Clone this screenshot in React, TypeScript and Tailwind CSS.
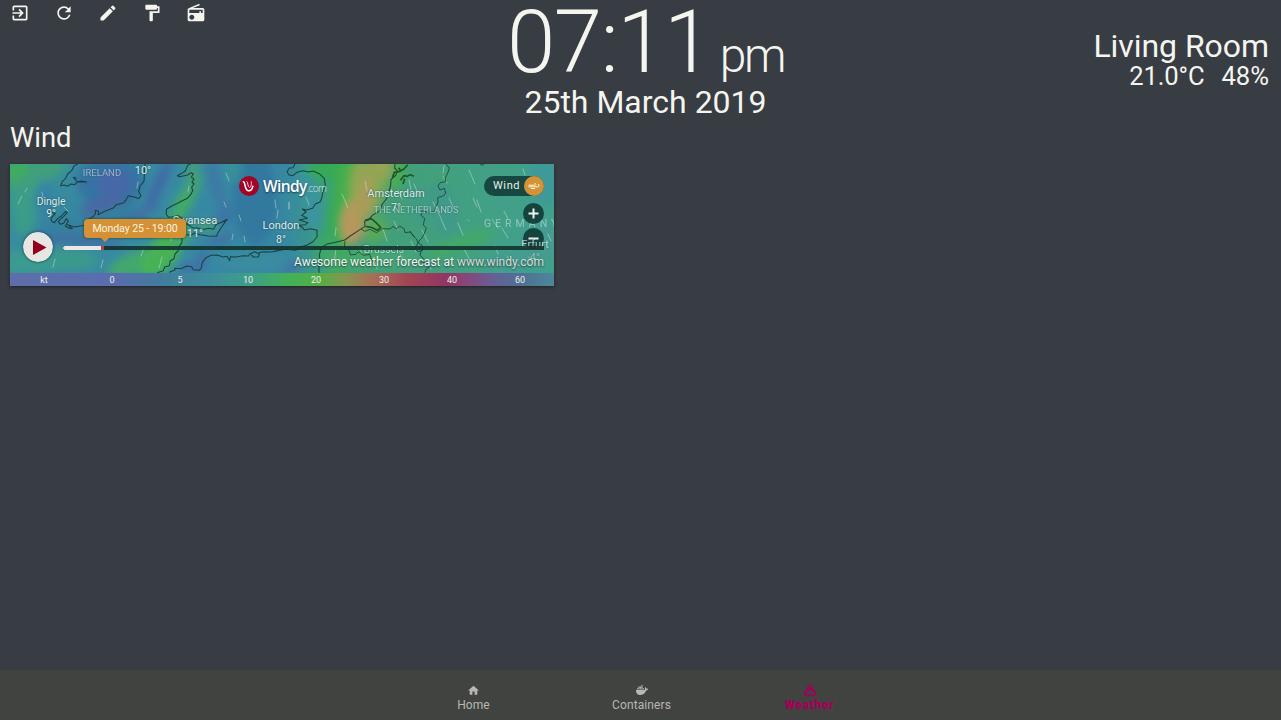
import type { ReactNode } from "react";
import { MdExitToApp, MdRefresh, MdEdit, MdRadio, MdHome } from "react-icons/md";
import { FaDocker } from "react-icons/fa";

// [cx, cy, rx, ry, color, angle]
const blobs: [number, number, number, number, string, number][] = [
  [14, 30, 14, 42, "#3b9c88", 0],
  [25, 8, 34, 14, "#3f9f7d", -20],
  [6, 6, 14, 10, "#40ac60", -30],
  [75, 60, 60, 14, "#34809f", -15],
  [34, 38, 9, 22, "#3584a4", 0],
  [100, 18, 34, 26, "#3573a2", 0],
  [58, 44, 18, 12, "#3688a0", 0],
  [92, 40, 24, 7, "#4866a5", -20],
  [104, 18, 18, 12, "#4668a8", 0],
  [72, 77, 44, 4, "#426ba3", 5],
  [148, 22, 6, 30, "#3f6ba5", 25],
  [120, 56, 34, 5, "#4070a4", -28],
  [20, 98, 34, 12, "#3b9b90", 0],
  [60, 96, 28, 10, "#3a9a8c", 0],
  [130, 98, 34, 12, "#42a86c", -20],
  [152, 90, 28, 15, "#47b255", -50],
  [168, 66, 12, 16, "#42a96a", -30],
  [175, 36, 8, 30, "#43aa66", 30],
  [182, 12, 7, 18, "#429f7c", 10],
  [198, 62, 14, 5, "#42a07c", 0],
  [206, 20, 6, 26, "#3c78a6", -15],
  [214, 52, 8, 12, "#3c74a6", 30],
  [210, 76, 16, 5, "#3f72a6", -20],
  [182, 104, 14, 5, "#4070a6", 0],
  [192, 94, 5, 8, "#3f70a6", 0],
  [245, 35, 22, 46, "#33789f", 0],
  [222, 6, 10, 12, "#389098", 0],
  [278, 102, 11, 7, "#4270a8", 0],
  [245, 98, 36, 9, "#3a8ca0", 0],
  [296, 15, 7, 20, "#3893a0", 0],
  [303, 46, 8, 20, "#3a94a0", 0],
  [330, 60, 13, 55, "#38ab55", 4],
  [318, 6, 24, 10, "#35aa55", 0],
  [338, 22, 12, 28, "#45ae4c", 0],
  [366, 14, 13, 40, "#78a954", 12],
  [350, 20, 10, 26, "#92a654", 5],
  [343, 58, 12, 22, "#bb955f", 5],
  [354, 38, 9, 26, "#aa9c58", 15],
  [371, 4, 12, 12, "#94a552", 0],
  [389, 10, 5, 18, "#44b048", 15],
  [366, 66, 10, 14, "#58aa55", 40],
  [316, 84, 12, 14, "#3ea668", 0],
  [350, 96, 40, 10, "#45a868", -5],
  [388, 92, 20, 12, "#44a578", 0],
  [450, 80, 36, 8, "#43a868", -20],
  [428, 22, 12, 12, "#43a470", 0],
  [433, 45, 14, 30, "#419a89", -15],
  [410, 40, 14, 20, "#419c84", 0],
  [535, 15, 16, 28, "#3d9a98", 0],
  [532, 78, 22, 20, "#459c90", 0],
  [490, 30, 20, 20, "#43a088", 0],
  [505, 98, 30, 8, "#439c92", 0],
];

// [x, y, dx, dy] wind particle streaks
const streaks: number[][] = [
  [8, 40, 4, -8], [15, 28, 2, -4], [44, 39, 5, 3], [54, 43, 4, 4], [32, 28, 1, 6],
  [127, 24, 1, -6], [91, 104, 2, -8], [131, 92, 3, -8], [43, 103, 2, -8], [97, 64, 4, -3],
  [149, 104, 3, -11], [161, 77, 1, -8], [178, 28, 1, -6], [216, 9, 3, 8], [229, 51, 2, 6],
  [223, 70, -1, 6], [234, 72, 1, 6], [214, 38, 2, 5], [268, 46, -1, 8], [265, 36, 1, 8],
  [296, 33, 3, 8], [279, 39, 0, 6], [355, 17, 2, 10], [332, 30, 6, 14], [326, 64, -1, 8],
  [326, 85, -2, 14], [279, 38, 0, 7], [349, 82, 3, 8], [373, 65, 4, 12], [388, 26, 4, 9],
  [399, 16, 2, 10], [384, 57, 4, 9], [404, 20, 5, 12], [412, 66, 6, 12], [401, 77, 5, 11],
  [425, 43, 6, 11], [423, 38, 3, 6], [433, 12, 4, 7], [448, 59, 5, 12], [439, 34, 4, 9],
  [454, 85, 7, 13], [459, 6, 6, 14], [463, 34, 4, 9], [467, 36, 4, 12], [431, 55, 5, 11],
  [480, 23, 3, 8], [482, 55, 6, 9], [485, 82, 3, 8], [492, 64, 6, 10], [497, 92, 5, 9],
  [494, 47, 4, 8], [513, 5, 2, 6], [519, 93, 4, 7], [522, 42, 3, 7], [538, 70, 3, 7],
  [458, 56, 1, 1], [418, 97, 3, 8], [390, 90, 5, 10], [365, 98, 2, 7], [434, 2, -1, 7],
];

function WindMap() {
  return (
    <svg className="absolute inset-0 h-[109px] w-[544px]" viewBox="0 0 544 109" aria-hidden="true">
      <defs>
        <linearGradient id="base">
          <stop offset="0" stopColor="#398c9d" />
          <stop offset=".25" stopColor="#378aa2" />
          <stop offset=".5" stopColor="#3787a4" />
          <stop offset=".58" stopColor="#3b9d80" />
          <stop offset=".72" stopColor="#439f7a" />
          <stop offset="1" stopColor="#40a18e" />
        </linearGradient>
        <filter id="soft" x="-60%" y="-60%" width="220%" height="220%">
          <feGaussianBlur stdDeviation="4" />
        </filter>
      </defs>
      <rect width="544" height="109" fill="url(#base)" />
      <g filter="url(#soft)">
        {blobs.map(([cx, cy, rx, ry, color, angle], i) => (
          <ellipse key={i} cx={cx} cy={cy} rx={rx} ry={ry} fill={color} transform={`rotate(${angle} ${cx} ${cy})`} />
        ))}
      </g>
      <g stroke="#d7e8df" strokeWidth=".9" strokeLinecap="round" opacity=".5">
        {streaks.map(([x, y, dx, dy], i) => (
          <line key={i} x1={x} y1={y} x2={x + dx} y2={y + dy} />
        ))}
      </g>
      <g fill="none" stroke="#17352f" strokeWidth="3.2" strokeLinejoin="round" opacity=".85">
        {/* Ireland */}
        <g transform="scale(.33333) translate(-15 -12)">
          <path d="M218 12L207 18 200 32 188 42 182 55 172 64 167 77 178 75 188 79 197 72 209 74 219 65 245 66 228 63 217 66 205 52 215 55" />
          <path d="M133 154L145 158 151 161 138 175 140 184 148 188 158 176 169 168 182 154 187 157 176 169 160 184 166 193 176 190 184 176 190 184 181 198 193 205 202 206 188 194 207 201 239 196 241 183 262 172 271 162 271 151 281 154 279 164 296 155 326 143 334 134 356 128 364 118 370 107 391 112 401 116 408 107 401 95 405 78 417 64 418 45 420 12" />
        </g>
        {/* Wales and the south-west */}
        <g transform="scale(.33333) translate(390 -12)">
          <path d="M151 12L143 16 136 33 125 40 112 47 119 50 143 45 153 38 160 42 154 52 162 57 156 66 162 72 155 81 158 92 152 104 142 115 124 124 113 130 97 137 80 147 78 161 85 172 101 170 114 167 125 174 119 184 138 189" />
          <path d="M138 224L154 226 163 219 181 224 205 228 230 229 234 218 243 204 258 182 262 178 240 189 229 193 221 208 206 205 188 209 173 204 158 203 145 195 138 190M126 234L126 248 116 261 114 273 105 282 102 296 91 302 88 317 74 321 70 332 52 338" />
          <path d="M88 337L105 330 104 325 123 326 140 318 155 320 160 329 178 331 184 324 187 307 198 293 213 286 231 285 250 291 261 289 269 302 271 290 288 291 309 287 325 288 331 281 344 275 358 282 355 291 340 291 333 284M356 278L370 275 394 276 410 273" />
        </g>
        {/* East Anglia, Kent and the French coast */}
        <g transform="scale(.33333) translate(795 -12)">
          <path d="M60 12L54 23 43 24 36 35 42 45 54 47 66 37 83 32 101 36 114 33 133 41 148 56 151 76 144 96 140 115 135 126 121 132 113 145 95 150 82 147 93 156 80 166 97 175 73 180 99 188 91 194 69 196 82 202 88 210 107 206 126 211 126 231 113 246 96 255 75 262 62 271 32 268 0 274" />
          <path d="M132 338L132 316 136 307 133 285 139 262 154 253 182 247 209 240 230 225 256 208 270 199 269 184 280 180 292 166 315 152 322 132 334 117 341 98 347 76 348 59 363 45 366 31 359 24 360 12" />
          <path stroke="#164725" strokeWidth="5" d="M270 181L289 176 303 188 317 202 307 211 292 203 272 199M352 53L358 37 375 34 387 27 398 14M377 32L371 23M376 61L387 47 397 49 405 44 417 49M384 72L389 56" />
          <path strokeWidth="2.6" d="M210 243L208 262 221 269 227 285 243 283 250 275 266 286 284 283 290 300 300 309M258 207L270 214 285 208 305 218 322 206 345 207 354 199 365 207 374 198 388 207 390 218 405 216 419 231" />
        </g>
        {/* Benelux and German borders */}
        <g strokeWidth="2.6" transform="scale(.33333) translate(1200 -12)">
          <path d="M108 12L118 24 112 43 106 52 107 65 91 68 84 78 90 90 103 85 107 99 101 107 83 113 84 128 76 143 75 155 55 157 36 153 33 166 44 175 40 195 49 204 43 221 35 235 27 243 20 256 14 267 26 275 38 271 36 255 25 249 19 237 10 228 0 213" />
          <path d="M34 270L30 286 40 295 35 305 52 311 62 318 49 327 44 338M210 12L218 16 223 12" />
        </g>
      </g>
    </svg>
  );
}

function MapLabel({ at, children }: { at: string; children: ReactNode }) {
  return (
    <span className={`absolute -translate-x-1/2 text-center leading-3 whitespace-nowrap text-[#dfece9] [text-shadow:0_0_2px_#1e494c] ${at}`}>
      {children}
    </span>
  );
}

function WindCard() {
  return (
    <div className="relative h-[122px] w-[544px] overflow-hidden shadow-[0_1px_3px_#1f2226]">
      <WindMap />
      <MapLabel at="left-[92px] top-[3px] text-[9.5px] opacity-55">IRELAND</MapLabel>
      <MapLabel at="left-[133px] top-[1px] text-[11px]">10°</MapLabel>
      <MapLabel at="left-[41px] top-[32px] text-[10.3px]">Dingle<br />9°</MapLabel>
      <MapLabel at="left-[185px] top-[51px] text-[11px]">Swansea</MapLabel>
      <MapLabel at="left-[185px] top-[64px] text-[11px]">11°</MapLabel>
      <MapLabel at="left-[271px] top-[56px] text-[11px]">London</MapLabel>
      <MapLabel at="left-[271px] top-[70px] text-[10.5px]">8°</MapLabel>
      <MapLabel at="left-[386px] top-[24px] text-[11px]">Amsterdam</MapLabel>
      <MapLabel at="left-[386px] top-[38px] text-[10.5px]">7°</MapLabel>
      <MapLabel at="left-[406px] top-[40px] text-[9.4px] opacity-60">THE NETHERLANDS</MapLabel>
      <MapLabel at="left-[374px] top-[80px] text-[10.5px] opacity-75">Brussels</MapLabel>
      <span className="absolute top-[54px] left-[474px] text-[10.5px] leading-3 tracking-[4px] whitespace-nowrap text-[#dfece9] opacity-50">GERMANY</span>

      <div className="absolute top-[12px] left-[229px] flex items-center">
        <svg className="size-5" viewBox="0 0 20 20">
          <circle cx="10" cy="10" r="10" fill="#a10425" />
          <path d="M4.3 5.8c2.4.1.9 8.2 5 9 2.7.4 4-2 4.6-4.6" fill="none" stroke="#fff" strokeWidth="1.5" strokeLinecap="round" />
          <path d="M8 5.5c1.2.6.6 5.8 2.4 6 1.9 0 2-3 1.9-5.8" fill="none" stroke="#f4dadd" strokeWidth="1" strokeLinecap="round" />
        </svg>
        <span className="ml-1 font-[family-name:Open_Sans] text-[15.5px] leading-5 font-semibold tracking-[-0.6px] text-white [text-shadow:0_1px_2px_#1b3a4a]">Windy</span>
        <span className="mt-1 font-[family-name:Open_Sans] text-[10px] leading-4 font-light tracking-[-0.6px] text-[#d9e5e4]">.com</span>
      </div>

      <div className="absolute top-[12px] right-[10px] flex h-5 w-[60px] items-center justify-between rounded-full bg-[#123d3a]/90 pl-[9px] text-[11px] tracking-[0.6px] text-[#eeeeea]">
        Wind
        <svg className="size-5" viewBox="0 0 20 20">
          <circle cx="10" cy="10" r="10" fill="#d49336" />
          <path d="M4.5 9.2h6.5c1.4 0 1.2-1.9-.4-1.7M4.5 10.8h9.3c2.2 0 1.8-2.5.2-2.4M7 12.5h4" fill="none" stroke="#fff5e1" strokeWidth="1" />
        </svg>
      </div>
      <svg className="absolute top-[39px] left-[513px] h-[46px] w-[21px]" viewBox="0 0 21 46">
        <g fill="#123d38" opacity=".92">
          <circle cx="10.5" cy="10.5" r="10.5" />
          <circle cx="10.5" cy="35.5" r="10.5" />
        </g>
        <path d="M5.5 10.5h10M10.5 5.5v10M5.5 35.5h10" stroke="#f4f4ef" strokeWidth="2" />
      </svg>
      <MapLabel at="left-[525px] top-[75px] text-[11px] opacity-75">Erfurt</MapLabel>
      <MapLabel at="left-[525px] top-[88px] text-[10.5px] opacity-50">4°</MapLabel>

      <div className="absolute top-[82px] left-[53px] flex h-1 w-[481px] bg-[#12332e]/90">
        <div className="w-[38px] rounded-l-full bg-[#ebe9e5]" />
        <div className="w-[3px] bg-[#b4463c]" />
      </div>
      <div className="absolute top-[55px] left-[74px] flex h-[19px] w-[102px] items-center justify-center rounded bg-[#d49136] text-[10.6px] tracking-[-0.1px] whitespace-nowrap text-[#fcf1de] shadow-[0_0_3px_#1c3c3c]">
        Monday 25 - 19:00
        <svg className="absolute top-[18px] left-[16px] h-[6px] w-[10px]" viewBox="0 0 10 6">
          <path d="M0 0h10L5 5z" fill="#d49136" />
        </svg>
      </div>
      <svg className="absolute top-[68px] left-[13px] size-[30px] rounded-full shadow-[0_0_3px_#1c3c4c]" viewBox="0 0 30 30">
        <circle cx="15" cy="15" r="15" fill="#e8e6e2" />
        <path d="M10 8l13.5 7.5L10 23z" fill="#94001c" />
      </svg>
      <p className="absolute top-[91px] right-[10px] text-[12px] leading-[14px] tracking-[0.02px] whitespace-nowrap text-[#f5f5f0] [text-shadow:0_1px_2px_#173f3c]">
        Awesome weather forecast at <span className="text-[#dcdad2]">www.windy.com</span>
      </p>

      <div className="absolute bottom-0 grid h-[13px] w-full grid-cols-8 bg-[linear-gradient(90deg,#5d6eaa_0%,#596dad_20%,#417d9c_28%,#3c8e9b_37%,#3d9e8a_44%,#42b057_51%,#55ad45_57%,#8b9150_62%,#a86c57_67%,#a04654_73%,#923663_80%,#87477d_84%,#655f95_89%,#4c7593_95%,#4c8899_100%)] text-center text-[9px] leading-[14px] text-[#eff1e9]">
        {["kt", "0", "5", "10", "20", "30", "40", "60"].map((v) => (
          <span key={v}>{v}</span>
        ))}
      </div>
    </div>
  );
}

function Tab({ label, active, children }: { label: string; active?: boolean; children: ReactNode }) {
  return (
    <a className={`flex w-[168px] flex-col items-center pt-[13px] text-[12px] leading-[14px] ${active ? "font-black tracking-[0.65px] text-[#a30057]" : "tracking-[0.1px] text-[#b7b7b4]"}`}>
      <span className="flex h-[14px] items-center">{children}</span>
      <span className="mt-px">{label}</span>
    </a>
  );
}

export default function App() {
  return (
    <div className="flex h-[720px] w-full flex-col overflow-hidden bg-[#383c43] font-[Roboto,sans-serif] text-[#f5f5f0]">
      <header className="grid h-[122px] grid-cols-[1fr_300px_1fr] items-start">
        <nav className="flex gap-6 pt-[3px] pl-[10px] text-[20px]">
          <MdExitToApp />
          <MdRefresh />
          <MdEdit />
          <svg className="size-5" viewBox="0 0 24 24" fill="currentColor">
            <path d="M18 4V3c0-.55-.45-1-1-1H5c-.55 0-1 .45-1 1v4c0 .55.45 1 1 1h12c.55 0 1-.45 1-1V6h1v4H9v11c0 .55.45 1 1 1h2c.55 0 1-.45 1-1v-9h8V4h-3z" />
          </svg>
          <MdRadio />
        </nav>
        <div className="flex flex-col items-center pl-[10px] whitespace-nowrap">
          <div className="flex h-[83px] items-baseline text-[87px] leading-[85px] font-light tracking-[-1.5px]">
            <span>07:11</span>
            <span className="ml-[9px] text-[48px] leading-[48px] tracking-[-2.4px]">pm</span>
          </div>
          <div className="text-[32px] leading-[38px]">25th March 2019</div>
        </div>
        <div className="pt-[27px] pr-3 text-right">
          <div className="text-[32px] leading-[38px] tracking-[-0.05px]">Living Room</div>
          <div className="flex justify-end gap-[17px] text-[25.6px] leading-[23px]">
            <span className="tracking-[-0.15px]">21.0°C</span>
            <span>48%</span>
          </div>
        </div>
      </header>
      <main className="flex-1 px-[10px]">
        <h2 className="h-[42px] text-[27.4px] leading-[32px]">Wind</h2>
        <WindCard />
      </main>
      <footer className="flex h-[50px] justify-center bg-[#414340] pl-[2px]">
        <Tab label="Home"><MdHome className="size-[13px]" /></Tab>
        <Tab label="Containers"><FaDocker className="size-[12px] scale-y-[1.2]" /></Tab>
        <Tab label="Weather" active>
          <svg className="size-[14px]" viewBox="0 0 14 14" fill="none" stroke="currentColor">
            <path d="M7 .5v2M3 2l1 1.5M11 2l-1 1.5M4 8c.6-5 5.4-5 6 0" strokeWidth="1.3" />
            <path d="M4 12.5a2.2 2.2 0 01.2-4.4 3.2 3.2 0 015.8-.3 2.4 2.4 0 01.5 4.7z" strokeWidth="1.7" />
            <path d="M5 6l4 1M4.5 10.5h5" strokeWidth="1" strokeDasharray="1 .7" />
          </svg>
        </Tab>
      </footer>
    </div>
  );
}
